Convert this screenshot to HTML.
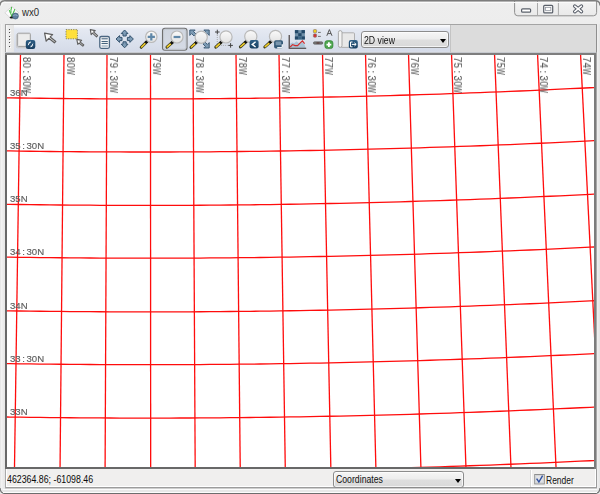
<!DOCTYPE html>
<html><head><meta charset="utf-8">
<style>
*{margin:0;padding:0;box-sizing:border-box}
html,body{width:600px;height:494px;overflow:hidden;background:#ececec}
body{font-family:"Liberation Sans",sans-serif;position:relative}
.abs{position:absolute}
#win{position:absolute;left:0;top:0;width:600px;height:494px;background:linear-gradient(90deg,#e2e2e2,#f2f2f2 1.5px,#ececec 3px,#e6e6e6 5px,#ececec 5px,#ececec 595px,#f0f0f0 597px,#e4e4e4 600px)}
#titlebg{position:absolute;left:0;top:0;width:600px;height:24px;background:linear-gradient(#e6e6e6,#eeeeee 3px,#ededed)}
#title{position:absolute;left:22px;top:7.2px;font-size:10px;color:#2a2a2a;transform:scaleX(0.96);transform-origin:0 0}
#tb{position:absolute;left:5px;top:24px;width:592px;height:29px;background:#dcdcdc;border-top:1px solid #a4a4a4;border-left:1px solid #a0a0a0;border-right:1px solid #8f8f8f}
#grip{position:absolute;left:0;top:0;width:8px;height:28px;background:linear-gradient(90deg,#fafafa,#ececec 2px,#e6e6e6)}
#tbar{position:absolute;left:8px;top:0;width:436px;height:28px;background:linear-gradient(#fbfcfd,#f2f4f8 2px,#e5e9f2 4px,#dde3ee 50%,#d5dbe8 94%,#eef1f6)}
#tbdiv{position:absolute;left:444px;top:0;width:1px;height:28px;background:#c4c4c4}
#cframe{position:absolute;left:5px;top:52px;width:592px;height:417px;background:linear-gradient(90deg,#686868 589px,#7c7c7c 589px,#7c7c7c 591px,#a8a8a8 591px)}
#ctop{position:absolute;left:5px;top:52px;width:591px;height:3px;background:linear-gradient(#c6c9ce 0,#c6c9ce 1px,#7e7e7e 1px)}
#canvas{position:absolute;left:7px;top:55px;width:587px;height:412px;background:#fff;overflow:hidden}
#canvas svg{position:absolute;left:-7px;top:-55px}
.vl{position:absolute;will-change:transform;font-size:10px;letter-spacing:0.4px;color:#5e5e5e;-webkit-text-stroke:0.15px #5e5e5e;transform-origin:0 0;transform:rotate(90deg) translate(0,-100%) scaleX(0.95);white-space:nowrap;line-height:1}
.hl{position:absolute;will-change:transform;font-size:9.6px;letter-spacing:0px;color:#5e5e5e;-webkit-text-stroke:0.15px #5e5e5e;transform-origin:0 0;transform:scaleX(1.0);white-space:nowrap;line-height:1}
.vl i{font-style:normal;margin:0 2.2px}
.hl i{font-style:normal;margin:0 1.6px}
.vl b{font-weight:normal;display:inline-block;transform:scaleX(0.72);transform-origin:0 0;margin-right:-2.3px}
#status{position:absolute;left:5px;top:469px;width:592px;height:19px;background:#f0efee;border-left:1px solid #a9a9a9;border-right:1px solid #9a9a9a;border-bottom:1px solid #9c9c9c;box-shadow:inset -1px -1px 0 #fff, inset 1px 0 0 #fff}
#coords{position:absolute;left:0.8px;top:4.6px;font-size:10px;color:#0a0a0a;transform:scaleX(0.88);transform-origin:0 0;white-space:nowrap}
#sdiv{position:absolute;left:524px;top:1px;width:1px;height:17px;background:#d8d8d8;box-shadow:1px 0 0 #fff}
.combo{position:absolute;border:1px solid #8c8c8c;border-radius:3px;background:linear-gradient(#f6f6f6,#ededed 45%,#dedede 55%,#d9d9d9);box-shadow:inset 0 0 0 1px rgba(255,255,255,.7)}
.combo span{position:absolute;left:1.6px;top:3.4px;font-size:10px;color:#111;white-space:nowrap;transform:scaleX(0.87);transform-origin:0 0}
.arr{position:absolute;width:0;height:0;border-left:3.5px solid transparent;border-right:3.5px solid transparent;border-top:4px solid #000}
#render{position:absolute;left:546.4px;top:474.9px;font-size:10px;color:#111;transform:scaleX(0.85);transform-origin:0 0}
</style></head><body>
<div id="win"></div><div id="titlebg"></div>
<div id="title">wx0</div>
<svg class="abs" style="left:0;top:0" width="600" height="24" viewBox="0 0 600 24">
<defs><linearGradient id="btn" x1="0" y1="0" x2="0" y2="1"><stop offset="0" stop-color="#f4f4f4"/><stop offset="1" stop-color="#e9e9e9"/></linearGradient></defs>
<path d="M514.6 0.5 V12.6 Q514.6 15.8 517.8 15.8 H593.4 Q596.6 15.8 596.6 12.6 V0.5" fill="url(#btn)" stroke="#8f8f8f" stroke-width="1"/>
<line x1="537.5" y1="1" x2="537.5" y2="15.5" stroke="#a9a9a9" stroke-width="1"/>
<line x1="558.4" y1="1" x2="558.4" y2="15.5" stroke="#a9a9a9" stroke-width="1"/>
<rect x="521.6" y="8.8" width="9" height="3.4" rx="1" fill="#fff" stroke="#5a606a" stroke-width="1.2"/>
<rect x="543.7" y="5.3" width="9" height="7.6" rx="1" fill="#f4f4f4" stroke="#5a606a" stroke-width="1.2"/>
<rect x="545.6" y="7.4" width="5.2" height="3.2" fill="#fff" stroke="#8a909a" stroke-width="0.7"/>
<path d="M574.8 6.2 L581.4 11.6 M581.4 6.2 L574.8 11.6" stroke="#555b66" stroke-width="3.6" stroke-linecap="round"/>
<path d="M574.8 6.2 L581.4 11.6 M581.4 6.2 L574.8 11.6" stroke="#fdfdfd" stroke-width="1.6" stroke-linecap="round"/>
<!-- app icon -->
<path d="M11.8 6.4 L18.8 12.8 L11.8 19.2 L4.8 12.8 Z" fill="#fbfbfb" stroke="#d2d2d2" stroke-width="0.8"/>
<g stroke="#45b845" stroke-width="1.1" stroke-linecap="round" fill="none" stroke-dasharray="1.6 0.6"><path d="M11.8 17 C11.6 14.6 10.2 12.6 9.4 10.6"/><path d="M11.9 16.4 C12.5 13.8 13.8 12.2 14.6 9.6"/><path d="M11 12.2 C10.8 10.4 11.2 8.8 11.6 7.4"/></g>
<ellipse cx="11.6" cy="17.6" rx="2" ry="1" fill="#1a1a1a"/>
<circle cx="15.4" cy="16" r="3" fill="#5f7f9e" stroke="#33506c" stroke-width="0.6"/>
<path d="M13.2 15.4 Q15.4 14.2 17.6 15.6" stroke="#a9c0d6" stroke-width="0.7" fill="none"/>
</svg>

<div id="tb"><div id="grip"></div><div id="tbar"></div><div id="tbdiv"></div></div>
<div id="cframe"></div><div id="ctop"></div>
<div id="canvas">
<svg width="600" height="494" viewBox="0 0 600 494"><g stroke="#ff0c0c" stroke-width="1.3" fill="none">
<line x1="20.69" y1="40.0" x2="14.31" y2="480.0"/>
<line x1="64.12" y1="40.0" x2="59.94" y2="480.0"/>
<line x1="107.06" y1="40.0" x2="105.04" y2="480.0"/>
<line x1="150.49" y1="40.0" x2="150.67" y2="480.0"/>
<line x1="192.93" y1="40.0" x2="195.25" y2="480.0"/>
<line x1="235.87" y1="40.0" x2="240.35" y2="480.0"/>
<line x1="278.80" y1="40.0" x2="285.45" y2="480.0"/>
<line x1="322.24" y1="40.0" x2="331.08" y2="480.0"/>
<line x1="365.17" y1="40.0" x2="376.18" y2="480.0"/>
<line x1="408.11" y1="40.0" x2="421.29" y2="480.0"/>
<line x1="451.05" y1="40.0" x2="466.39" y2="480.0"/>
<line x1="493.98" y1="40.0" x2="511.49" y2="480.0"/>
<line x1="536.92" y1="40.0" x2="556.59" y2="480.0"/>
<line x1="579.85" y1="40.0" x2="601.70" y2="480.0"/>
<polyline fill="none" points="-10,97.51 0,97.69 10,97.85 20,98.00 30,98.14 40,98.26 50,98.38 60,98.49 70,98.58 80,98.66 90,98.73 100,98.79 110,98.84 120,98.87 130,98.90 140,98.91 150,98.92 160,98.91 170,98.89 180,98.85 190,98.81 200,98.76 210,98.69 220,98.61 230,98.52 240,98.42 250,98.31 260,98.19 270,98.05 280,97.91 290,97.75 300,97.58 310,97.40 320,97.21 330,97.01 340,96.79 350,96.57 360,96.33 370,96.08 380,95.82 390,95.55 400,95.27 410,94.98 420,94.67 430,94.35 440,94.03 450,93.69 460,93.33 470,92.97 480,92.60 490,92.21 500,91.82 510,91.41 520,90.99 530,90.56 540,90.12 550,89.66 560,89.20 570,88.72 580,88.23 590,87.73 600,87.22 610,86.70"/>
<polyline fill="none" points="-10,150.61 0,150.79 10,150.95 20,151.10 30,151.23 40,151.36 50,151.48 60,151.58 70,151.67 80,151.76 90,151.83 100,151.88 110,151.93 120,151.97 130,151.99 140,152.01 150,152.01 160,152.00 170,151.98 180,151.95 190,151.90 200,151.85 210,151.78 220,151.71 230,151.62 240,151.52 250,151.41 260,151.29 270,151.15 280,151.01 290,150.85 300,150.68 310,150.51 320,150.32 330,150.11 340,149.90 350,149.68 360,149.44 370,149.19 380,148.94 390,148.67 400,148.39 410,148.09 420,147.79 430,147.47 440,147.15 450,146.81 460,146.46 470,146.10 480,145.73 490,145.35 500,144.95 510,144.55 520,144.13 530,143.70 540,143.26 550,142.81 560,142.35 570,141.87 580,141.39 590,140.89 600,140.38 610,139.87"/>
<polyline fill="none" points="-10,204.02 0,204.19 10,204.35 20,204.50 30,204.63 40,204.76 50,204.87 60,204.98 70,205.07 80,205.15 90,205.22 100,205.28 110,205.33 120,205.36 130,205.39 140,205.40 150,205.40 160,205.39 170,205.37 180,205.34 190,205.30 200,205.24 210,205.18 220,205.10 230,205.02 240,204.92 250,204.81 260,204.68 270,204.55 280,204.41 290,204.25 300,204.09 310,203.91 320,203.72 330,203.52 340,203.31 350,203.08 360,202.85 370,202.60 380,202.35 390,202.08 400,201.80 410,201.51 420,201.21 430,200.90 440,200.57 450,200.24 460,199.89 470,199.53 480,199.16 490,198.78 500,198.39 510,197.98 520,197.57 530,197.14 540,196.71 550,196.26 560,195.80 570,195.33 580,194.85 590,194.35 600,193.85 610,193.33"/>
<polyline fill="none" points="-10,256.82 0,256.99 10,257.15 20,257.29 30,257.43 40,257.56 50,257.67 60,257.77 70,257.86 80,257.95 90,258.01 100,258.07 110,258.12 120,258.16 130,258.18 140,258.19 150,258.20 160,258.19 170,258.17 180,258.14 190,258.09 200,258.04 210,257.97 220,257.90 230,257.81 240,257.71 250,257.60 260,257.48 270,257.35 280,257.21 290,257.05 300,256.89 310,256.71 320,256.52 330,256.32 340,256.11 350,255.89 360,255.66 370,255.41 380,255.16 390,254.89 400,254.62 410,254.33 420,254.03 430,253.72 440,253.39 450,253.06 460,252.71 470,252.36 480,251.99 490,251.61 500,251.22 510,250.82 520,250.41 530,249.99 540,249.55 550,249.11 560,248.65 570,248.18 580,247.70 590,247.21 600,246.71 610,246.20"/>
<polyline fill="none" points="-10,310.52 0,310.69 10,310.85 20,310.99 30,311.13 40,311.25 50,311.37 60,311.47 70,311.56 80,311.64 90,311.71 100,311.77 110,311.81 120,311.85 130,311.87 140,311.89 150,311.89 160,311.88 170,311.86 180,311.83 190,311.79 200,311.73 210,311.67 220,311.59 230,311.51 240,311.41 250,311.30 260,311.18 270,311.05 280,310.91 290,310.75 300,310.59 310,310.41 320,310.23 330,310.03 340,309.82 350,309.60 360,309.37 370,309.12 380,308.87 390,308.61 400,308.33 410,308.04 420,307.74 430,307.44 440,307.11 450,306.78 460,306.44 470,306.09 480,305.72 490,305.35 500,304.96 510,304.56 520,304.15 530,303.73 540,303.30 550,302.85 560,302.40 570,301.93 580,301.46 590,300.97 600,300.47 610,299.96"/>
<polyline fill="none" points="-10,363.32 0,363.49 10,363.65 20,363.79 30,363.93 40,364.05 50,364.16 60,364.27 70,364.36 80,364.44 90,364.50 100,364.56 110,364.61 120,364.64 130,364.67 140,364.68 150,364.68 160,364.67 170,364.65 180,364.62 190,364.58 200,364.53 210,364.46 220,364.39 230,364.30 240,364.21 250,364.10 260,363.98 270,363.85 280,363.71 290,363.55 300,363.39 310,363.21 320,363.03 330,362.83 340,362.62 350,362.41 360,362.18 370,361.93 380,361.68 390,361.42 400,361.14 410,360.86 420,360.56 430,360.26 440,359.94 450,359.61 460,359.27 470,358.91 480,358.55 490,358.18 500,357.79 510,357.40 520,356.99 530,356.57 540,356.14 550,355.70 560,355.25 570,354.79 580,354.31 590,353.83 600,353.33 610,352.83"/>
<polyline fill="none" points="-10,416.72 0,416.89 10,417.05 20,417.19 30,417.32 40,417.45 50,417.56 60,417.66 70,417.75 80,417.83 90,417.90 100,417.96 110,418.00 120,418.04 130,418.06 140,418.07 150,418.08 160,418.07 170,418.05 180,418.02 190,417.98 200,417.92 210,417.86 220,417.78 230,417.70 240,417.60 250,417.49 260,417.38 270,417.25 280,417.11 290,416.95 300,416.79 310,416.62 320,416.43 330,416.24 340,416.03 350,415.81 360,415.58 370,415.34 380,415.09 390,414.83 400,414.56 410,414.28 420,413.98 430,413.67 440,413.36 450,413.03 460,412.69 470,412.34 480,411.98 490,411.61 500,411.23 510,410.83 520,410.43 530,410.01 540,409.59 550,409.15 560,408.70 570,408.24 580,407.77 590,407.29 600,406.79 610,406.29"/>
<polyline fill="none" points="-10,470.12 0,470.29 10,470.45 20,470.59 30,470.72 40,470.85 50,470.96 60,471.06 70,471.15 80,471.23 90,471.29 100,471.35 110,471.40 120,471.43 130,471.46 140,471.47 150,471.47 160,471.46 170,471.44 180,471.41 190,471.37 200,471.32 210,471.25 220,471.18 230,471.09 240,471.00 250,470.89 260,470.77 270,470.64 280,470.50 290,470.35 300,470.19 310,470.02 320,469.84 330,469.64 340,469.44 350,469.22 360,468.99 370,468.75 380,468.50 390,468.24 400,467.97 410,467.69 420,467.40 430,467.09 440,466.78 450,466.45 460,466.12 470,465.77 480,465.41 490,465.04 500,464.66 510,464.27 520,463.87 530,463.45 540,463.03 550,462.59 560,462.15 570,461.69 580,461.22 590,460.74 600,460.25 610,459.75"/>
</g></svg>
</div>
<div style="position:absolute;left:7px;top:55px;width:587px;height:412px;overflow:hidden">
<div style="position:absolute;left:-7px;top:-55px;width:600px;height:494px">
<div class="vl" style="left:21.4px;top:57.4px">80<i>:</i>30<b>W</b></div>
<div class="vl" style="left:64.9px;top:57.4px">80<b>W</b></div>
<div class="vl" style="left:107.9px;top:57.4px">79<i>:</i>30<b>W</b></div>
<div class="vl" style="left:151.4px;top:57.4px">79<b>W</b></div>
<div class="vl" style="left:193.9px;top:57.4px">78<i>:</i>30<b>W</b></div>
<div class="vl" style="left:236.9px;top:57.4px">78<b>W</b></div>
<div class="vl" style="left:279.9px;top:57.4px">77<i>:</i>30<b>W</b></div>
<div class="vl" style="left:323.4px;top:57.4px">77<b>W</b></div>
<div class="vl" style="left:366.4px;top:57.4px">76<i>:</i>30<b>W</b></div>
<div class="vl" style="left:409.4px;top:57.4px">76<b>W</b></div>
<div class="vl" style="left:452.4px;top:57.4px">75<i>:</i>30<b>W</b></div>
<div class="vl" style="left:495.4px;top:57.4px">75<b>W</b></div>
<div class="vl" style="left:538.4px;top:57.4px">74<i>:</i>30<b>W</b></div>
<div class="vl" style="left:581.4px;top:57.4px">74<b>W</b></div>
<div class="hl" style="left:10px;top:87.8px">36N</div>
<div class="hl" style="left:10px;top:140.9px">35<i>:</i>30N</div>
<div class="hl" style="left:10px;top:194.3px">35N</div>
<div class="hl" style="left:10px;top:247.1px">34<i>:</i>30N</div>
<div class="hl" style="left:10px;top:300.8px">34N</div>
<div class="hl" style="left:10px;top:353.6px">33<i>:</i>30N</div>
<div class="hl" style="left:10px;top:407.0px">33N</div>
</div></div>
<div id="status">
<div id="coords">462364.86; -61098.46</div><div id="sdiv"></div>
<div class="combo" style="left:327px;top:2px;width:131px;height:16.5px"><span style="top:2.4px">Coordinates</span><div class="arr" style="left:121px;top:6.8px"></div></div>
</div>
<svg class="abs" style="left:0;top:0" width="600" height="60" viewBox="0 0 600 60">
<defs>
<linearGradient id="lens" x1="0" y1="0" x2="0" y2="1"><stop offset="0" stop-color="#fafafa"/><stop offset="1" stop-color="#e2e2e2"/></linearGradient>
<linearGradient id="badge" x1="0" y1="0" x2="0" y2="1"><stop offset="0" stop-color="#2f5f86"/><stop offset="1" stop-color="#173e60"/></linearGradient>
<linearGradient id="pressed" x1="0" y1="0" x2="0" y2="1"><stop offset="0" stop-color="#cfd5df"/><stop offset="1" stop-color="#d6dbe6"/></linearGradient>
</defs>
<!-- gripper dots -->
<g fill="#4a4a4a"><rect x="9" y="29" width="1" height="1"/><rect x="9" y="32" width="1" height="1"/><rect x="9" y="36" width="1" height="1"/><rect x="9" y="39" width="1" height="1"/><rect x="9" y="42" width="1" height="1"/><rect x="9" y="46" width="1" height="1"/></g>
<g fill="#ffffff"><rect x="10" y="30" width="1" height="1"/><rect x="10" y="33" width="1" height="1"/><rect x="10" y="37" width="1" height="1"/><rect x="10" y="40" width="1" height="1"/><rect x="10" y="43" width="1" height="1"/><rect x="10" y="47" width="1" height="1"/></g>
<!-- 1 display map -->
<rect x="16.4" y="34.2" width="13.6" height="13.6" rx="1" fill="none" stroke="#c9c9c9" stroke-width="1"/>
<rect x="17.4" y="33.2" width="13" height="13.4" rx="1" fill="#dedede" stroke="#a2a2a2" stroke-width="1"/>
<rect x="18.6" y="34.4" width="10.6" height="11" fill="#ececec"/>
<rect x="25.8" y="39.9" width="9.5" height="9" rx="2.2" fill="url(#badge)"/>
<path d="M27.8 43.4 L30.6 41.2 L30.6 43 Z M33.4 45.4 L30.6 47.6 L30.6 45.8 Z" fill="#fff"/>
<path d="M28.2 45.2 L29.4 42.6 M32.9 43.6 L31.8 46.2" stroke="#e8eef4" stroke-width="1"/>
<!-- 2 pointer -->
<path d="M44.6 33.2 L52.6 34.6 L50.2 36.9 L55.8 41.4 L54.4 42.8 L48.8 38.3 L46.2 41.2 Z" fill="#fdfdfd" stroke="#5e5e5e" stroke-width="1.25" stroke-linejoin="round"/>
<!-- 3 select -->
<rect x="66" y="29.6" width="11.4" height="9.2" fill="#ffe03b"/>
<rect x="66" y="29.6" width="11.4" height="9.2" fill="none" stroke="#7d7a5a" stroke-width="0.9" stroke-dasharray="1.2 1.2"/>
<path d="M76.8 39.4 L81.6 40.4 L80 41.8 L83.8 45 L82.8 46.2 L79 43 L77.8 44.4 Z" fill="#fdfdfd" stroke="#5e5e5e" stroke-width="1.1" stroke-linejoin="round"/>
<!-- 4 query -->
<path d="M90.3 29.6 L95.2 30.6 L93.6 32 L97.6 35.6 L96.5 36.8 L92.5 33.2 L91.2 34.6 Z" fill="#fdfdfd" stroke="#5e5e5e" stroke-width="1.1" stroke-linejoin="round"/>
<rect x="99.8" y="36.5" width="9.6" height="11.8" rx="1.5" fill="#fbfbfb" stroke="#4a6580" stroke-width="1.3"/>
<g stroke="#48657f" stroke-width="1.1"><line x1="101.5" y1="38.8" x2="107.8" y2="38.8"/><line x1="101.5" y1="41.5" x2="107.8" y2="41.5"/><line x1="101.5" y1="43.5" x2="107.8" y2="43.5"/><line x1="101.5" y1="46" x2="107.8" y2="46" stroke="#8aa0b4"/></g>
<!-- 5 pan -->
<g fill="#7e9cb6" stroke="#34536e" stroke-width="1" stroke-linejoin="round">
<path d="M124.6 30 L128 33.6 L126.2 33.6 L126.2 36 L123 36 L123 33.6 L121.2 33.6 Z"/>
<path d="M124.6 47.8 L128 44.2 L126.2 44.2 L126.2 41.8 L123 41.8 L123 44.2 L121.2 44.2 Z"/>
<path d="M116 39 L119.6 35.6 L119.6 37.4 L122 37.4 L122 40.6 L119.6 40.6 L119.6 42.4 Z"/>
<path d="M133.4 39 L129.8 35.6 L129.8 37.4 L127.4 37.4 L127.4 40.6 L129.8 40.6 L129.8 42.4 Z"/>
</g>
<!-- 6 zoom in -->
<path d="M147 41.5 L141.2 47.3" stroke="#3a3a20" stroke-width="3" stroke-linecap="round"/>
<path d="M145.6 43 L141.6 47" stroke="#f2cf2a" stroke-width="1.6" stroke-linecap="round"/>
<path d="M147.6 40.8 L145.2 43.2" stroke="#111" stroke-width="2.4"/>
<circle cx="151.3" cy="36.8" r="5.7" fill="url(#lens)" stroke="#b9b9b9" stroke-width="1.2"/>
<path d="M151.3 33.2 V40.4 M147.7 36.8 H154.9" stroke="#5f87a8" stroke-width="2.2"/>
<!-- 7 zoom out pressed -->
<rect x="162.5" y="28.3" width="24.5" height="22" rx="2.5" fill="url(#pressed)" stroke="#707070" stroke-width="1.1"/>
<rect x="163.6" y="29.4" width="22.3" height="19.8" rx="1.8" fill="none" stroke="#bfc4cc" stroke-width="0.8"/>
<path d="M172.6 42.2 L167 47.2" stroke="#3a3a20" stroke-width="3" stroke-linecap="round"/>
<path d="M171 43.6 L167.3 46.9" stroke="#f2cf2a" stroke-width="1.6" stroke-linecap="round"/>
<path d="M173.2 41.6 L170.8 43.8" stroke="#111" stroke-width="2.4"/>
<circle cx="177" cy="37" r="6" fill="url(#lens)" stroke="#b9b9b9" stroke-width="1.2"/>
<path d="M173.6 37 H180.4" stroke="#5f87a8" stroke-width="2.2"/>
<!-- 8 zoom extent -->
<g fill="#7e9cb6" stroke="#34536e" stroke-width="0.9" stroke-linejoin="round">
<path d="M189.8 30 L195.2 30 L193.6 31.6 L196 34 L194 36 L191.6 33.6 L189.8 35.4 Z"/>
<path d="M209.2 30 L203.8 30 L205.4 31.6 L203 34 L205 36 L207.4 33.6 L209.2 35.4 Z"/>
<path d="M209.2 48 L203.8 48 L205.4 46.4 L203 44 L205 42 L207.4 44.4 L209.2 42.6 Z"/>
</g>
<path d="M196.8 42 L191 47.4" stroke="#3a3a20" stroke-width="3" stroke-linecap="round"/>
<path d="M195.4 43.4 L191.4 47" stroke="#f2cf2a" stroke-width="1.6" stroke-linecap="round"/>
<path d="M197.4 41.4 L195 43.6" stroke="#111" stroke-width="2.4"/>
<circle cx="201.2" cy="37.2" r="6.1" fill="url(#lens)" stroke="#b9b9b9" stroke-width="1.2"/>
<!-- 9 zoom region -->
<g stroke="#444" stroke-width="1"><path d="M215 32 H219.6 M217.3 29.7 V34.3"/><path d="M228.3 45.4 H232.9 M230.6 43.1 V47.7"/></g>
<g stroke="#9a9a9a" stroke-width="0.8" stroke-dasharray="1 1" fill="none"><path d="M217.3 35 V45.4 H227.5"/></g>
<path d="M221.6 41.8 L215.8 47.2" stroke="#3a3a20" stroke-width="3" stroke-linecap="round"/>
<path d="M220.2 43.2 L216.2 46.8" stroke="#f2cf2a" stroke-width="1.6" stroke-linecap="round"/>
<path d="M222.2 41.2 L219.8 43.4" stroke="#111" stroke-width="2.4"/>
<circle cx="226" cy="36.9" r="6.1" fill="url(#lens)" stroke="#b9b9b9" stroke-width="1.2"/>
<!-- 10 zoom back -->
<path d="M246.4 41.4 L240.4 46.9" stroke="#3a3a20" stroke-width="3" stroke-linecap="round"/>
<path d="M245 42.8 L240.8 46.5" stroke="#f2cf2a" stroke-width="1.6" stroke-linecap="round"/>
<path d="M247 40.8 L244.6 43" stroke="#111" stroke-width="2.4"/>
<circle cx="250.8" cy="36.4" r="6.1" fill="url(#lens)" stroke="#b9b9b9" stroke-width="1.2"/>
<rect x="249.6" y="40.1" width="9" height="8.5" rx="2" fill="url(#badge)"/>
<path d="M255.6 41.8 L252.2 44.4 L255.6 47" fill="none" stroke="#fff" stroke-width="1.4"/>
<!-- 11 zoom options -->
<path d="M271 41.4 L264.8 47" stroke="#3a3a20" stroke-width="3" stroke-linecap="round"/>
<path d="M269.6 42.8 L265.2 46.6" stroke="#f2cf2a" stroke-width="1.6" stroke-linecap="round"/>
<path d="M271.6 40.8 L269.2 43" stroke="#111" stroke-width="2.4"/>
<circle cx="275.5" cy="36.4" r="6.1" fill="url(#lens)" stroke="#b9b9b9" stroke-width="1.2"/>
<rect x="274.1" y="40.3" width="8.9" height="8.2" rx="1.8" fill="#345a78"/>
<rect x="275.6" y="41.6" width="5.6" height="3.6" rx="0.6" fill="#7895ad"/>
<path d="M277.2 48.5 H281.4 Q283 48.5 283 46.9 V44.2 L281.6 44.2 L281.6 47 L277.2 47 Z" fill="#e9eef2"/>
<!-- 12 analyze -->
<rect x="294.9" y="30.1" width="10" height="9.4" fill="#6f8fa8"/>
<g fill="#23496a"><rect x="294.9" y="30.1" width="3.4" height="3.1"/><rect x="301.5" y="30.1" width="3.4" height="3.1"/><rect x="298.2" y="33.2" width="3.4" height="3.1"/><rect x="294.9" y="36.4" width="3.4" height="3.1"/><rect x="301.5" y="36.4" width="3.4" height="3.1"/></g>
<rect x="298.2" y="36.4" width="3.4" height="3.1" fill="#3b6585"/>
<path d="M289.8 47.8 L290.4 43.6 L292.5 42.4 L294.2 43.2 L296.5 41.2 L299 43.5 L302 41.6 L304.5 44.5 L305.5 47.8 Z" fill="#a9c3d6"/>
<path d="M289.2 35 V48.2 H306.2" fill="none" stroke="#3a3030" stroke-width="1.1"/>
<path d="M290.2 47 L292.6 44.6 L295 45.6 L297.6 45.6 L300 43.2 L302.4 40.8 L304.6 43.6" fill="none" stroke="#d42a2a" stroke-width="1.1"/>
<!-- 13 overlay -->
<rect x="313.4" y="29.6" width="3.2" height="3.2" rx="0.8" fill="#f2d21a" stroke="#8a7a7a" stroke-width="0.7"/>
<rect x="313.4" y="34" width="3.2" height="3.2" rx="0.8" fill="#d83030" stroke="#8a7a7a" stroke-width="0.7"/>
<g stroke="#555" stroke-width="0.8"><line x1="318" y1="32.4" x2="320.8" y2="32.4"/><line x1="318" y1="36.4" x2="320.8" y2="36.4"/></g>
<path d="M326.8 35.8 L329.4 29.6 L332 35.8 M327.8 33.6 H331" fill="none" stroke="#555" stroke-width="1"/>
<rect x="313.4" y="41.8" width="9.4" height="2.4" rx="1.2" fill="#777" stroke="#444" stroke-width="0.5"/>
<rect x="316.5" y="42.4" width="3" height="1.2" fill="#5a3a3a"/>
<rect x="324.8" y="40.6" width="8.2" height="8" rx="2.6" fill="#4ea64f" stroke="#2f7f32" stroke-width="0.6"/>
<path d="M328.9 42.2 V47 M326.5 44.6 H331.3" stroke="#fff" stroke-width="1.8"/>
<!-- 14 save -->
<rect x="341" y="32.8" width="13.5" height="14.6" rx="1" fill="#e8e8e8" stroke="#a8a8a8" stroke-width="0.9"/>
<rect x="338.4" y="30.6" width="3.6" height="16.8" rx="1.8" fill="#f3f3f3" stroke="#a0a0a0" stroke-width="0.9"/>
<rect x="348.8" y="40.1" width="9" height="8.5" rx="2" fill="url(#badge)"/>
<path d="M352.5 42 H350.5 V46.8 H352.5 M351.8 44.4 H356 M354.4 42.8 L356.2 44.4 L354.4 46" fill="none" stroke="#fff" stroke-width="1"/>
</svg>

<div class="combo" style="left:361px;top:31px;width:88px;height:16.5px"><span>2D view</span><div class="arr" style="left:77.5px;top:6.8px"></div></div>
<svg class="abs" style="left:530px;top:470px" width="20" height="18" viewBox="530 470 20 18">
<rect x="534.7" y="474.5" width="9.6" height="9.4" fill="#f4f4f4" stroke="#8e8f8f" stroke-width="1"/>
<rect x="535.8" y="475.6" width="7.4" height="7.2" fill="#e2e3e6" stroke="#c4c6ca" stroke-width="0.6"/>
<path d="M536.6 478.6 L538.9 482 L542.6 475.6" fill="none" stroke="#2e4fa0" stroke-width="1.4"/>
</svg>
<div id="render">Render</div>
<svg class="abs" style="left:0;top:0" width="600" height="494" viewBox="0 0 600 494">
<path d="M0 5.5 Q0 0.7 4.8 0.7 H595.2 Q600 0.7 600 5.5" fill="none" stroke="#7d7d7d" stroke-width="1.4"/>
<path d="M1.5 6 Q1.8 2.2 5.2 2" fill="none" stroke="#fafafa" stroke-width="1"/>
<path d="M0 488 Q0.4 493.4 5 493.5 M595 493.5 Q599.6 493.4 600 488" fill="none" stroke="#777" stroke-width="1.3"/>
<rect x="5" y="488" width="592" height="1" fill="#cdcdcd"/>
<rect x="3" y="489" width="594" height="1" fill="#fbfbfb"/>
<rect x="2" y="490" width="596" height="2" fill="#e8e8e8"/>
<rect x="3" y="492" width="594" height="1" fill="#fcfcfc"/>
<rect x="4" y="493" width="592" height="1" fill="#6d6d6d"/>
<line x1="5" y1="2.5" x2="595" y2="2.5" stroke="#fbfbfb" stroke-width="1"/>
</svg>
</body></html>
